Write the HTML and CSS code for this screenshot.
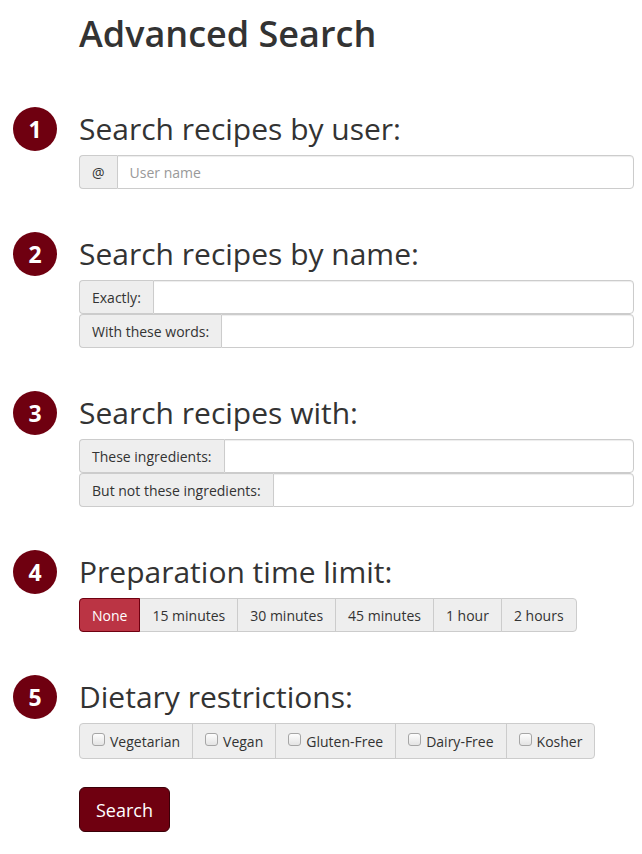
FILE: index.html
```html
<!DOCTYPE html>
<html lang="en">
<head>
<meta charset="utf-8">
<title>Advanced Search</title>
<link rel="stylesheet" href="styles.css">
</head>
<body>
<main class="page">
  <h1 class="title">Advanced Search</h1>

  <section class="step">
    <span class="badge">1</span>
    <h2 class="step-title">Search recipes by user:</h2>
    <div class="step-body">
      <div class="input-group">
        <span class="addon">@</span>
        <input class="field" type="text" placeholder="User name">
      </div>
    </div>
  </section>

  <section class="step">
    <span class="badge">2</span>
    <h2 class="step-title">Search recipes by name:</h2>
    <div class="step-body">
      <div class="input-group">
        <span class="addon">Exactly:</span>
        <input class="field" type="text">
      </div>
      <div class="input-group">
        <span class="addon">With these words:</span>
        <input class="field" type="text">
      </div>
    </div>
  </section>

  <section class="step">
    <span class="badge">3</span>
    <h2 class="step-title">Search recipes with:</h2>
    <div class="step-body">
      <div class="input-group">
        <span class="addon">These ingredients:</span>
        <input class="field" type="text">
      </div>
      <div class="input-group">
        <span class="addon">But not these ingredients:</span>
        <input class="field" type="text">
      </div>
    </div>
  </section>

  <section class="step">
    <span class="badge">4</span>
    <h2 class="step-title">Preparation time limit:</h2>
    <div class="step-body">
      <div class="btn-group">
        <button class="seg seg-active" type="button">None</button>
        <button class="seg" type="button">15 minutes</button>
        <button class="seg" type="button">30 minutes</button>
        <button class="seg" type="button">45 minutes</button>
        <button class="seg" type="button">1 hour</button>
        <button class="seg" type="button">2 hours</button>
      </div>
    </div>
  </section>

  <section class="step">
    <span class="badge">5</span>
    <h2 class="step-title">Dietary restrictions:</h2>
    <div class="step-body">
      <div class="check-group">
        <label class="check"><input type="checkbox"> Vegetarian</label>
        <label class="check"><input type="checkbox"> Vegan</label>
        <label class="check"><input type="checkbox"> Gluten-Free</label>
        <label class="check"><input type="checkbox"> Dairy-Free</label>
        <label class="check"><input type="checkbox"> Kosher</label>
      </div>
    </div>
  </section>

  <div class="actions">
    <button class="submit" type="button">Search</button>
  </div>
</main>
</body>
</html>
```

FILE: styles.css
```css
* { box-sizing: border-box; }

body {
  margin: 0;
  background: #fff;
  color: #333;
  font-family: "Open Sans", "Liberation Sans", sans-serif;
  font-size: 14px;
  line-height: 1.42857;
}

.page {
  padding: 14px 8px 0 79px;
}

.title {
  margin: 0 0 58px;
  font-size: 36px;
  line-height: 40px;
  font-weight: 600;
  color: #333;
}

.step {
  display: grid;
  grid-template-columns: 1fr;
  margin-bottom: 48px;
  position: relative;
}

.step-title {
  margin: 0 0 10px;
  font-size: 30px;
  line-height: 33px;
  font-weight: 400;
  color: #333;
}

.badge {
  position: absolute;
  left: -66px;
  top: -5px;
  width: 44px;
  height: 44px;
  border-radius: 50%;
  background: #6f0010;
  color: #fff;
  font-size: 23px;
  font-weight: 700;
  line-height: 44px;
  text-align: center;
}

.input-group {
  display: flex;
  height: 34px;
}

.addon {
  display: flex;
  align-items: center;
  padding: 1px 12px 0;
  background: #eee;
  border: 1px solid #ccc;
  border-right: 0;
  border-radius: 4px 0 0 4px;
  color: #333;
  font-size: 14px;
  white-space: nowrap;
}

.field {
  flex: 1;
  min-width: 0;
  height: 34px;
  padding: 6px 12px;
  border: 1px solid #ccc;
  border-radius: 0 4px 4px 0;
  box-shadow: inset 0 1px 1px rgba(0, 0, 0, 0.075);
  font-family: inherit;
  font-size: 14px;
  color: #555;
}

.field::placeholder { color: #999; }

.btn-group {
  display: inline-flex;
}

.seg {
  height: 34px;
  padding: 0 12px;
  margin-left: -1px;
  background: #eee;
  border: 1px solid #ccc;
  border-radius: 0;
  color: #333;
  font-family: inherit;
  font-size: 14px;
}

.seg:first-child { margin-left: 0; border-radius: 4px 0 0 4px; }
.seg:last-child { border-radius: 0 4px 4px 0; }

.seg-active {
  position: relative;
  background: #bb3444;
  border-color: #6f0010;
  color: #fff;
}

.check-group {
  display: inline-flex;
  height: 36px;
  background: #eee;
  border: 1px solid #ccc;
  border-radius: 4px;
}

.check {
  display: flex;
  align-items: center;
  padding: 1px 12px 0;
  border-left: 1px solid #ccc;
  font-size: 14px;
  white-space: nowrap;
}

.check:first-child { border-left: 0; }

.check input {
  appearance: none;
  -webkit-appearance: none;
  width: 13px;
  height: 13px;
  margin: 0 5px 4px 0;
  border: 1px solid #a6a6a6;
  border-radius: 3px;
  background: linear-gradient(#fdfdfd, #e4e4e4);
}

.actions {
  margin-top: -20px;
}

.submit {
  height: 45px;
  padding: 0 16px;
  background: #6f0010;
  border: 1px solid #3a0008;
  border-radius: 6px;
  color: #fff;
  font-family: inherit;
  font-size: 18px;
}
```
